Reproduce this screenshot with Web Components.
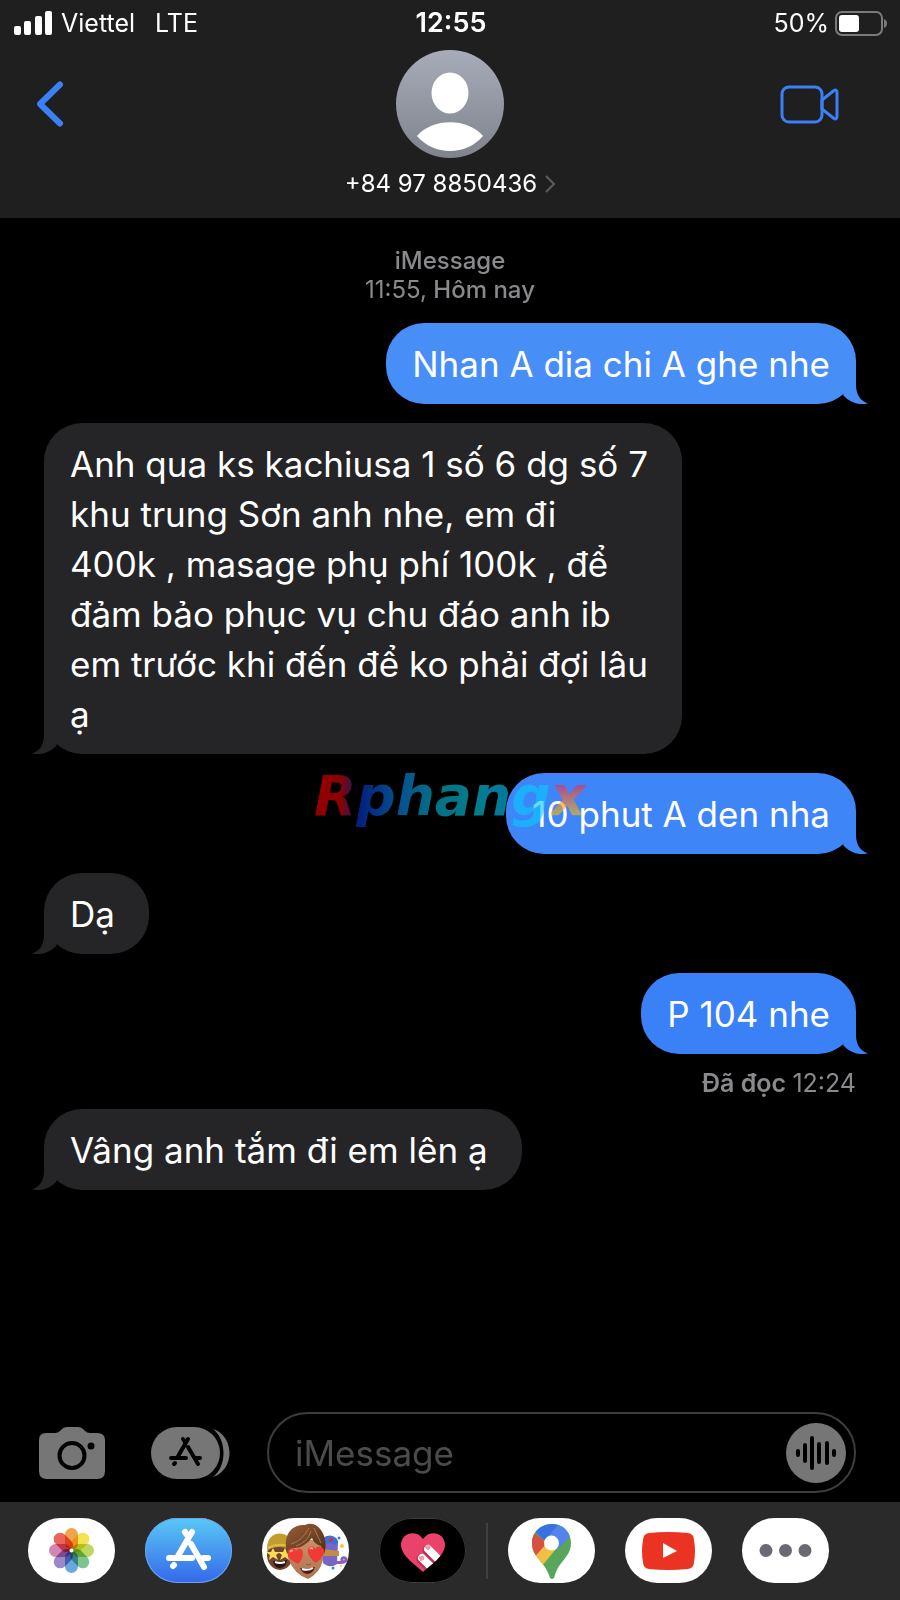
<!DOCTYPE html>
<html lang="vi">
<head>
<meta charset="utf-8">
<meta name="viewport" content="width=device-width, initial-scale=1">
<title>iMessage</title>
<style>
    html, body {
        margin: 0;
        background: #000;
    }

    body {
        font-family: Inter, "Liberation Sans", sans-serif;
        color: #fff;
    }
</style>
</head>
<body>
<message-app>
    <status-bar slot="top" carrier="Viettel" network="LTE" time="12:55" battery="50"></status-bar>
    <contact-header slot="top" number="+84 97 8850436"></contact-header>

    <thread-stamp service="iMessage" time="11:55," day="Hôm nay"></thread-stamp>
    <chat-bubble side="sent" style="--bubble: #488ef7">Nhan A dia chi A ghe nhe</chat-bubble>
    <chat-bubble side="received">Anh qua ks kachiusa 1 số 6 dg số 7<br>khu trung Sơn anh nhe, em đi<br>400k , masage phụ phí 100k , để<br>đảm bảo phục vụ chu đáo anh ib<br>em trước khi đến để ko phải đợi lâu<br>ạ</chat-bubble>
    <chat-bubble side="sent" style="--bubble: #3e85f7">10 phut A den nha</chat-bubble>
    <chat-bubble side="received">Dạ</chat-bubble>
    <chat-bubble side="sent" style="--bubble: #3a80f6">P 104 nhe</chat-bubble>
    <read-receipt time="12:24">Đã đọc</read-receipt>
    <chat-bubble side="received">Vâng anh tắm đi em lên ạ</chat-bubble>

    <message-composer slot="bottom"></message-composer>
    <app-dock slot="bottom"></app-dock>
    <word-mark slot="overlay"></word-mark>
</message-app>

<script>
class MessageApp extends HTMLElement {
    constructor() {
        super();
        this.attachShadow({ mode: 'open' }).innerHTML = `
            <style>
                :host {
                    display: flex;
                    flex-direction: column;
                    position: relative;
                    min-height: 100vh;
                }

                header {
                    background: #1f1f1f;
                }

                main {
                    flex: 1;
                    display: flex;
                    flex-direction: column;
                    padding: 28px 44px 32px;
                }

                ::slotted(chat-bubble) {
                    margin-top: 19px;
                }

                ::slotted(read-receipt) {
                    margin: 15px 0 -7px;
                }
            </style>
            <header><slot name="top"></slot></header>
            <main><slot></slot></main>
            <footer><slot name="bottom"></slot></footer>
            <slot name="overlay"></slot>
        `;
    }
}

class StatusBar extends HTMLElement {
    constructor() {
        super();
        this.attachShadow({ mode: 'open' });
    }

    connectedCallback() {
        const level = Number(this.getAttribute('battery'));
        this.shadowRoot.innerHTML = `
            <style>
                :host {
                    display: grid;
                    grid-template-columns: 1fr auto 1fr;
                    align-items: center;
                    height: 46px;
                    padding: 0 12px 0 14px;
                    font-size: 25px;
                    line-height: 30px;
                }

                .left, .right {
                    display: flex;
                    align-items: center;
                }

                .left {
                    gap: 20px;
                }

                .carrier {
                    display: flex;
                    align-items: center;
                    gap: 9px;
                }

                .right {
                    justify-content: flex-end;
                    gap: 6px;
                }

                .time {
                    font-size: 27px;
                    font-weight: 600;
                }

                svg {
                    display: block;
                }
            </style>
            <div class="left">
                <span class="carrier">
                    <svg width="38" height="24" fill="#fff">
                        <rect y="15" width="7" height="9" rx="2"/>
                        <rect x="10" y="10" width="7" height="14" rx="2"/>
                        <rect x="21" y="5" width="7" height="19" rx="2"/>
                        <rect x="31" width="7" height="24" rx="2"/>
                    </svg>
                    <span>${this.getAttribute('carrier')}</span>
                </span>
                <span>${this.getAttribute('network')}</span>
            </div>
            <div class="time">${this.getAttribute('time')}</div>
            <div class="right">
                <span>${level}%</span>
                <svg width="53" height="25">
                    <rect x="1" y="1" width="46" height="23" rx="6" fill="none" stroke="#7b7b7b" stroke-width="2"/>
                    <rect x="4" y="4" width="${level * 0.4}" height="17" rx="3" fill="#fff"/>
                    <path d="M49 8c4 1 4 8 0 9z" fill="#7b7b7b"/>
                </svg>
            </div>
        `;
    }
}

class ContactHeader extends HTMLElement {
    constructor() {
        super();
        this.attachShadow({ mode: 'open' });
    }

    connectedCallback() {
        this.shadowRoot.innerHTML = `
            <style>
                :host {
                    display: grid;
                    grid-template-columns: 1fr auto 1fr;
                    align-items: center;
                    padding: 4px 61px 19px 37px;
                }

                button {
                    padding: 0;
                    border: 0;
                    background: none;
                    color: inherit;
                    font: inherit;
                    cursor: pointer;
                }

                svg {
                    display: block;
                }

                .video {
                    justify-self: end;
                }

                .back {
                    justify-self: start;
                }

                .avatar {
                    margin: 0 0 0 24px;
                }

                .number {
                    grid-column: 1 / -1;
                    justify-self: center;
                    display: flex;
                    align-items: center;
                    gap: 8px;
                    margin: 11px 0 0 24px;
                    font-size: 24px;
                    line-height: 30px;
                }
            </style>
            <button class="back" aria-label="Back">
                <svg width="28" height="46" fill="none" stroke="#3a80f6" stroke-width="6" stroke-linecap="round" stroke-linejoin="round">
                    <path d="M23 3.500L3 23l20 19.500"/>
                </svg>
            </button>
            <svg class="avatar" width="108" height="108" viewBox="0 0 108 108">
                <defs>
                    <linearGradient id="g" x2="0" y2="1">
                        <stop stop-color="#a8acb9"/>
                        <stop offset="1" stop-color="#7f838c"/>
                    </linearGradient>
                </defs>
                <circle cx="54" cy="54" r="54" fill="url(#g)"/>
                <ellipse cx="54" cy="43" rx="18.500" ry="20.500" fill="#fff"/>
                <path d="M21 86C36 67.500 72 67.500 87 86C70 106 38 106 21 86z" fill="#fff"/>
            </svg>
            <button class="video" aria-label="FaceTime">
                <svg width="59" height="40" fill="none" stroke="#3a80f6" stroke-width="3" stroke-linejoin="round">
                    <rect x="2" y="3" width="40" height="35" rx="7"/>
                    <path d="M42 16L54 6.500Q57 5 57 9V32Q57 36 54 34.500L42 25z"/>
                </svg>
            </button>
            <button class="number">
                <span>${this.getAttribute('number')}</span>
                <svg width="10" height="18" fill="none" stroke="#5d5d60" stroke-width="2">
                    <path d="M1 1l8 8-8 8"/>
                </svg>
            </button>
        `;
    }
}

class ThreadStamp extends HTMLElement {
    constructor() {
        super();
        this.attachShadow({ mode: 'open' });
    }

    connectedCallback() {
        this.shadowRoot.innerHTML = `
            <style>
                :host {
                    display: block;
                    text-align: center;
                    color: #8a8a8e;
                    font-size: 24px;
                    line-height: 29px;
                    font-weight: 500;
                }

                time {
                    font-weight: 400;
                }
            </style>
            <div>${this.getAttribute('service')}</div>
            <div><time>${this.getAttribute('time')}</time> ${this.getAttribute('day')}</div>
        `;
    }
}

class ChatBubble extends HTMLElement {
    constructor() {
        super();
        this.attachShadow({ mode: 'open' }).innerHTML = `
            <style>
                :host {
                    display: block;
                    position: relative;
                    align-self: flex-start;
                    box-sizing: border-box;
                    max-width: 80%;
                    padding: 16px 34px 15px 26px;
                    border-radius: 38px;
                    background: var(--bubble, #252527);
                    font-size: 35px;
                    line-height: 50px;
                }

                :host([side="sent"]) {
                    align-self: flex-end;
                    padding: 16px 26px 15px;
                }

                /* tail hangs outside the bubble's bottom corner */
                .tail {
                    position: absolute;
                    bottom: 0;
                    left: -12px;
                    transform: scaleX(-1);
                    fill: var(--bubble, #252527);
                }

                :host([side="sent"]) .tail {
                    left: auto;
                    right: -12px;
                    transform: none;
                }
            </style>
            <svg class="tail" width="40" height="40"><path d="M28 0V21C28 30 32 37 40 39.500C30 41.500 21 38 15 31z"/></svg>
            <slot></slot>
        `;
    }
}

class ReadReceipt extends HTMLElement {
    constructor() {
        super();
        this.attachShadow({ mode: 'open' });
    }

    connectedCallback() {
        this.shadowRoot.innerHTML = `
            <style>
                :host {
                    display: block;
                    text-align: right;
                    color: #8a8a8e;
                    font-size: 25px;
                    line-height: 28px;
                    font-weight: 600;
                }

                time {
                    font-weight: 400;
                }
            </style>
            <slot></slot> <time>${this.getAttribute('time')}</time>
        `;
    }
}

class MessageComposer extends HTMLElement {
    constructor() {
        super();
        this.attachShadow({ mode: 'open' }).innerHTML = `
            <style>
                :host {
                    display: flex;
                    align-items: center;
                    padding: 0 44px 9px 39px;
                }

                button {
                    flex: none;
                    padding: 0;
                    border: 0;
                    background: none;
                    cursor: pointer;
                }

                svg {
                    display: block;
                }

                .apps {
                    margin: 0 36px 0 46px;
                }

                .field {
                    flex: 1;
                    display: flex;
                    align-items: center;
                    box-sizing: border-box;
                    height: 81px;
                    min-width: 0;
                    padding: 0 8px 0 26px;
                    border: 2px solid #3d3d3d;
                    border-radius: 41px;
                }

                input {
                    flex: 1;
                    min-width: 0;
                    padding: 0;
                    border: 0;
                    outline: 0;
                    background: none;
                    color: #fff;
                    font: inherit;
                    font-size: 35px;
                    line-height: 50px;
                }

                input::placeholder {
                    color: #4b4b4d;
                    opacity: 1;
                }
            </style>
            <button aria-label="Camera">
                <svg width="66" height="52">
                    <path d="M7 6H16Q19 6 21 4L23 2Q25 0 28 0H39Q42 0 44 2L46 4Q48 6 51 6H58Q66 6 66 13V44Q66 52 58 52H8Q0 52 0 44V13Q0 6 7 6z" fill="#767676"/>
                    <circle cx="33" cy="28.500" r="12.500" fill="none" stroke="#000" stroke-width="4"/>
                    <circle cx="52" cy="19" r="3.500"/>
                </svg>
            </button>
            <button class="apps" aria-label="Apps">
                <svg width="80" height="52">
                    <rect width="69" height="52" rx="26" fill="#767676"/>
                    <path d="M62 2C84 9 84 43 62 50C76 39 76 13 62 2z" fill="#767676"/>
                    <g stroke="#000" stroke-width="4" stroke-linecap="round" fill="none">
                        <path d="M37 12L26 31M32 12L34 15M37 20L47 37M20 31H35M45 31H49M24 36L23 37"/>
                    </g>
                </svg>
            </button>
            <div class="field">
                <input type="text" placeholder="iMessage" aria-label="iMessage">
                <button aria-label="Audio">
                    <svg width="60" height="60">
                        <circle cx="30" cy="30" r="30" fill="#767676"/>
                        <path d="M12 28v4M19 22v16M26 15v30M33 21v18M41 20v20M48 28v4" stroke="#000" stroke-width="4" stroke-linecap="round"/>
                    </svg>
                </button>
            </div>
        `;
    }
}

class AppDock extends HTMLElement {
    constructor() {
        super();
        this.attachShadow({ mode: 'open' });
    }

    connectedCallback() {
        const petals = ['#f09a37', '#f3df3c', '#b5d44f', '#70bf86', '#5b9fdd', '#8f7cc0', '#cf79ae', '#e8534c']
            .map((color, i) => `<rect x="37" y="10" width="13" height="22" rx="6.5" fill="${color}" transform="rotate(${i * 45} 43.5 32.5)"/>`)
            .join('');

        this.shadowRoot.innerHTML = `
            <style>
                :host {
                    display: flex;
                    align-items: center;
                    gap: 30px;
                    height: 97px;
                    padding: 0 28px 1px;
                    background: #2a2a2a;
                }

                button {
                    flex: none;
                    width: 87px;
                    height: 65px;
                    padding: 0;
                    border: 0;
                    border-radius: 33px;
                    background: #fff;
                    overflow: hidden;
                    cursor: pointer;
                }

                svg {
                    display: block;
                }

                .petals {
                    isolation: isolate;
                }

                .petals rect {
                    mix-blend-mode: multiply;
                    opacity: 0.9;
                }

                .store {
                    background: linear-gradient(#5ac8f5, #3568ea);
                    box-shadow: inset 0 0 0 1px #6aa4ef;
                }

                .touch {
                    background: #000;
                    box-shadow: inset 0 0 0 1px #3c3c3c;
                }

                .divider {
                    flex: none;
                    width: 2px;
                    height: 56px;
                    margin: 0 -10px;
                    background: #404042;
                }
            </style>
            <button aria-label="Photos">
                <svg width="87" height="65"><g class="petals">${petals}</g><circle cx="43.500" cy="32.500" r="2" fill="#fff"/></svg>
            </button>
            <button class="store" aria-label="App Store">
                <svg width="87" height="65" fill="none" stroke="#fff" stroke-width="6" stroke-linecap="round">
                    <path d="M40 14L42 17M47 14L33 38M24 40H47M28 48L29 47M58 40H63"/>
                    <path d="M46 26L59 49"/>
                </svg>
            </button>
            <button aria-label="Memoji">
                <svg width="87" height="65">
                    <defs>
                        <linearGradient id="hair" x2="1" y2="1">
                            <stop stop-color="#9a6036"/>
                            <stop offset="1" stop-color="#4f2b18"/>
                        </linearGradient>
                        <linearGradient id="skin" x2="0" y2="1">
                            <stop stop-color="#c99068"/>
                            <stop offset="1" stop-color="#ad7450"/>
                        </linearGradient>
                    </defs>
                    <ellipse cx="18" cy="37" rx="13" ry="15" fill="#70452d"/>
                    <path d="M5 31C5 10 29 12 31 28L29 32C22 28 12 28 6 32z" fill="#c39c2d"/>
                    <path d="M6 30Q17 24 29 29" stroke="#e0bd45" stroke-width="2" fill="none"/>
                    <path d="M11 30l2 4 5 0-4 3 2 5-5-3-4 3 1-5-4-3 5 0zM23 30l2 4 4 0-3 3 1 5-4-3-5 3 2-5-4-3 5 0z" fill="#ffdc58"/>
                    <path d="M11 43Q18 45 25 42Q24 50 17 50Q12 49 11 43z" fill="#2a1010"/>
                    <path d="M13 44Q18 46 23 44" stroke="#fff" stroke-width="2"/>
                    <path d="M60 22C64 15 75 17 76 24L75 46C70 50 64 48 61 45z" fill="#7566c8"/>
                    <path d="M60 22C64 15 75 17 76 24L74 27Q67 23 61 27z" fill="#3f70cf"/>
                    <path d="M61 31L77 33V38L61 38z" fill="#c48b42"/>
                    <circle cx="69" cy="22" r="2" fill="#c4365c"/>
                    <path d="M73 44C83 46 86 42 83 40Q79 39 80 43" fill="none" stroke="#8a5fc3" stroke-width="3"/>
                    <g fill="#f3c63f"><circle cx="80" cy="28" r="2"/><circle cx="79" cy="48" r="1"/></g>
                    <g fill="#3b7ce7"><circle cx="77" cy="20" r="1.500"/><circle cx="71" cy="50" r="1.500"/></g>
                    <path d="M26 22H61L61 42Q58 55 46 61Q32 56 27 42z" fill="url(#skin)"/>
                    <path d="M25 36C20 15 31 6 43 7C56 1 68 19 62 36L59 28Q52 26 50 20Q41 31 30 30z" fill="url(#hair)"/>
                    <path d="M29 26Q40 23 47 10M34 28Q46 24 49 13M52 10Q56 19 59 25" stroke="#ad7750" stroke-width="1" fill="none"/>
                    <path d="M36 46C30 43 24 39 26 33C28 29 33 30 34 33C36 29 41 30 41 35C41 40 38 44 36 46zM54 45C50 42 45 37 46 31C48 27 52 28 53 31C55 27 61 28 62 32C63 37 58 42 54 45z" fill="#f03a35"/>
                    <path d="M28 34Q29 32 31 33M48 31Q49 29 51 31" stroke="#ff9a89" stroke-width="2" fill="none"/>
                    <path d="M38 50Q46 52 53 49Q51 56 45 56Q40 55 38 50z" fill="#54191a"/>
                    <path d="M40 51Q46 53 51 50" stroke="#fff" stroke-width="2" fill="none"/>
                    <path d="M44 46Q46 48 49 46" stroke="#95583c" stroke-width="1" fill="none"/>
                </svg>
            </button>
            <button class="touch" aria-label="Digital Touch">
                <svg width="87" height="65">
                    <defs>
                        <clipPath id="heart"><path d="M44 54C38 48 22 38 22 27C22 15 37 11 44 21C51 11 66 15 66 27C66 38 50 48 44 54z"/></clipPath>
                    </defs>
                    <g clip-path="url(#heart)">
                        <path d="M20 10h50v50H20z" fill="#ea426a"/>
                        <g stroke="#b92e52" stroke-width="9" stroke-linecap="round"><path d="M48 32L64 48M42 41L58 57"/></g>
                        <g stroke="#fff" stroke-width="8" stroke-linecap="round"><path d="M49 31L66 48M43 40L60 57"/></g>
                    </g>
                    <path d="M46 29l4-2 1 3-2 2zM40 39l4-1 1 3-3 2z" fill="#f29cae" stroke="#f29cae" stroke-linejoin="round"/>
                </svg>
            </button>
            <div class="divider"></div>
            <button aria-label="Google Maps">
                <svg width="87" height="65">
                    <defs>
                        <clipPath id="pin"><path d="M44 6C33 6 24 14 24 25C24 39 36 43 41 57Q42 61 44 61Q46 61 47 57C51 43 63 39 63 25C63 14 55 6 44 6z"/></clipPath>
                    </defs>
                    <g clip-path="url(#pin)">
                        <path d="M20 2h50v62H20z" fill="#58a55c"/>
                        <path d="M14 46L44 12L52 26L34 48L26 57z" fill="#f1bf42"/>
                        <path d="M20 10L39 25L22 44z" fill="#d85140"/>
                        <path d="M37 23L54 2L70 10L50 31z" fill="#5383ec"/>
                        <path d="M26 13L44 2H54L37 23z" fill="#3871e0"/>
                    </g>
                    <circle cx="43.500" cy="25" r="7.500" fill="#fff"/>
                </svg>
            </button>
            <button aria-label="YouTube">
                <svg width="87" height="65">
                    <path d="M24 15Q43 13 63 15Q69 16 69 22Q71 33 69 44Q69 50 63 51Q43 53 24 51Q18 50 18 44Q16 33 18 22Q18 16 24 15z" fill="#ea3323"/>
                    <path d="M38 25L52 33L38 40z" fill="#fff"/>
                </svg>
            </button>
            <button aria-label="More">
                <svg width="87" height="65" fill="#6a6a73">
                    <circle cx="24" cy="32.500" r="6.500"/>
                    <circle cx="43.500" cy="32.500" r="6.500"/>
                    <circle cx="63" cy="32.500" r="6.500"/>
                </svg>
            </button>
        `;
    }
}

class WordMark extends HTMLElement {
    constructor() {
        super();
        this.attachShadow({ mode: 'open' }).innerHTML = `
            <style>
                /* floats over the middle of the whole conversation */
                :host {
                    position: absolute;
                    top: 50%;
                    left: 50%;
                    transform: translate(-50%, -50%);
                    padding-bottom: 8px;
                    font: italic bold 55px/64px "DejaVu Sans", sans-serif;
                    white-space: nowrap;
                    opacity: 0.6;
                    pointer-events: none;
                }

                span {
                    background: linear-gradient(90deg, #f00000 0 11%, #0636d0 19%, #0888f0 36%, #08bedc 52%, #08d0e8 68%, #08ccff 74% 100%);
                    background-clip: text;
                    -webkit-background-clip: text;
                    color: transparent;
                }

                .end {
                    background-image: linear-gradient(#f02050 30%, #ffb414 75%);
                }
            </style>
            <span>Rphang</span><span class="end">x</span>
        `;
    }
}

customElements.define('message-app', MessageApp);
customElements.define('status-bar', StatusBar);
customElements.define('contact-header', ContactHeader);
customElements.define('thread-stamp', ThreadStamp);
customElements.define('chat-bubble', ChatBubble);
customElements.define('read-receipt', ReadReceipt);
customElements.define('message-composer', MessageComposer);
customElements.define('app-dock', AppDock);
customElements.define('word-mark', WordMark);
</script>
</body>
</html>
